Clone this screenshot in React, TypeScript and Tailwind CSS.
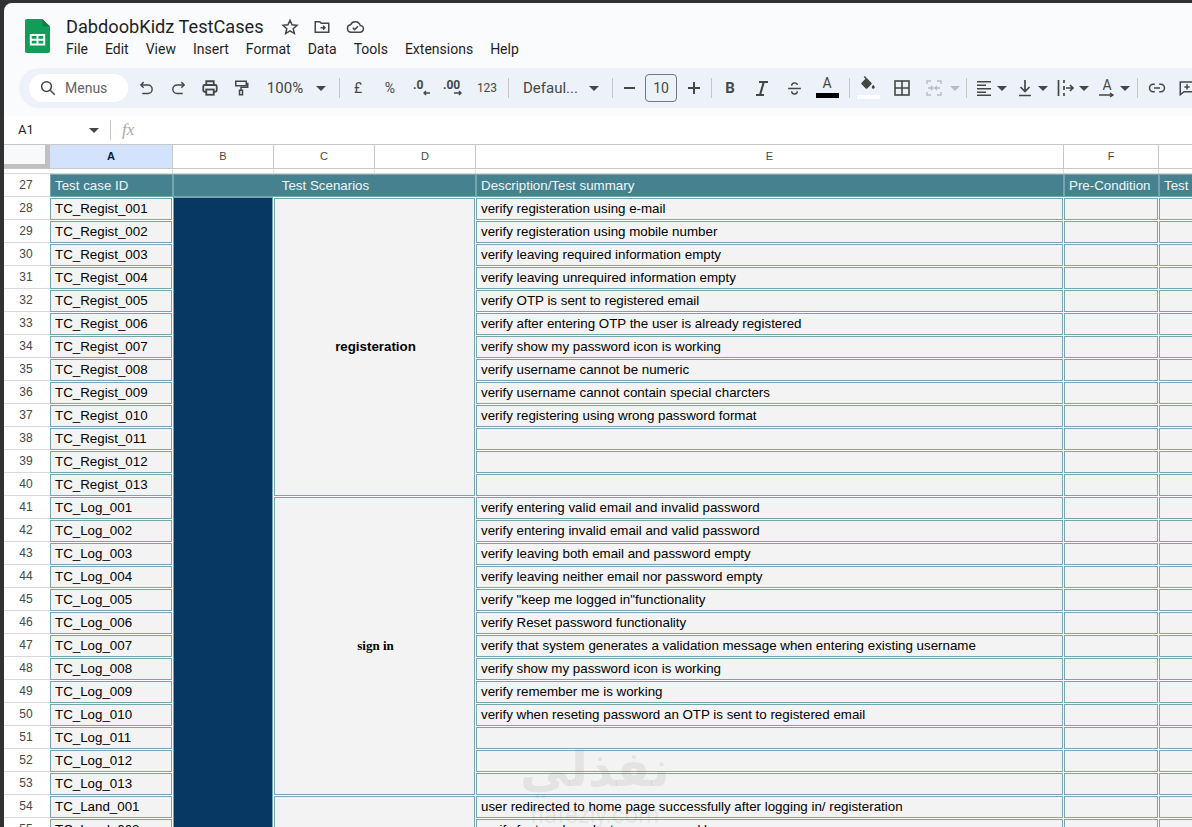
import React from "react";

const regist = ["verify registeration using e-mail","verify registeration using mobile number","verify leaving required information empty","verify leaving unrequired information empty","verify OTP is sent to registered email","verify after entering OTP the user is already registered","verify show my password icon is working","verify username cannot be numeric","verify username cannot contain special charcters","verify registering using wrong password format","","",""];
const log = ["verify entering valid email and invalid password","verify entering invalid email and valid password","verify leaving both email and password empty","verify leaving neither email nor password empty","verify \"keep me logged in\"functionality","verify Reset password functionality","verify that system generates a validation message when entering existing username","verify show my password icon is working","verify remember me is working","verify when reseting password an OTP is sent to registered email","","",""];
const land = ["user redirected to home page successfully after logging in/ registeration","verify featured products are arranged by"];

const rows: { n: number; id: string; e: string }[] = [];
regist.forEach((e, i) => rows.push({ n: 28 + i, id: "TC_Regist_" + String(i + 1).padStart(3, "0"), e }));
log.forEach((e, i) => rows.push({ n: 41 + i, id: "TC_Log_" + String(i + 1).padStart(3, "0"), e }));
land.forEach((e, i) => rows.push({ n: 54 + i, id: "TC_Land_" + String(i + 1).padStart(3, "0"), e }));

const Sep = () => <div className="w-px h-[20px] bg-[#c7c7c7] shrink-0" />;
const Caret = ({ c = "#444746" }: { c?: string }) => (
  <svg width="10" height="5" viewBox="0 0 10 5" className="shrink-0"><path d="M0 0h10L5 5z" fill={c} /></svg>
);
const L = ({ children, s = 18 }: { children: React.ReactNode; s?: number }) => (
  <svg width={s} height={s} viewBox="0 0 24 24" fill="none" stroke="#444746" strokeWidth="2">{children}</svg>
);

function Toolbar() {
  return (
    <div className="ml-[15px] mr-[-30px] h-[40px] rounded-[20px] bg-[#edf2fa] flex items-center text-[#444746] overflow-hidden shrink-0 font-['Roboto',sans-serif]">
      <div className="ml-[10px] w-[99px] h-[28px] rounded-[14px] bg-white flex items-center shrink-0 pl-[10px]">
        <svg width="18" height="18" viewBox="0 0 24 24" fill="none" stroke="#444746" strokeWidth="2"><circle cx="10" cy="10" r="6.5" /><path d="M15 15l6 6" /></svg>
        <span className="ml-[8px] text-[14px] text-[#5f6368]">Menus</span>
      </div>
      <div className="w-[32px] ml-[2px] flex justify-center shrink-0"><L s={17}><path d="M8 11L4 7l4-4" /><path d="M4 7h10a6 6 0 0 1 0 12H6" /></L></div>
      <div className="w-[32px] flex justify-center shrink-0"><L s={17}><path d="M16 11l4-4-4-4" /><path d="M20 7H10a6 6 0 0 0 0 12h8" /></L></div>
      <div className="w-[32px] flex justify-center shrink-0"><svg width="18" height="18" viewBox="0 0 24 24" fill="none" stroke="#444746" strokeWidth="2.400"><path d="M7 8V3h10v5" /><rect x="3" y="8" width="18" height="9" rx="2" /><rect x="7" y="14" width="10" height="7" fill="#edf2fa" /></svg></div>
      <div className="w-[30px] flex justify-center shrink-0"><L><rect x="5" y="3" width="14" height="6" /><path d="M19 6h2v5h-9v4" /><rect x="10" y="15" width="4" height="6" /></L></div>
      <div className="w-[58px] text-[15px] text-center shrink-0">100%</div>
      <div className="w-[2px] shrink-0" />
      <Caret />
      <div className="w-[13px] shrink-0" /><Sep />
      <div className="w-[36px] text-center text-[14px] shrink-0">£</div>
      <div className="w-[28px] text-center text-[14px] shrink-0">%</div>
      <div className="w-[36px] flex justify-center shrink-0"><svg width="20" height="20" viewBox="0 0 20 20" fill="none" stroke="#444746"><text x="1" y="11" fontSize="12" fontWeight="700" fill="#444746" stroke="none" fontFamily="Roboto, sans-serif">.0</text><path d="M18 15h-6M14 13l-2 2 2 2" strokeWidth="1.4" /></svg></div>
      <div className="w-[28px] flex justify-center shrink-0"><svg width="22" height="20" viewBox="0 0 22 20" fill="none" stroke="#444746"><text x="0" y="11" fontSize="12" fontWeight="700" fill="#444746" stroke="none" fontFamily="Roboto, sans-serif">.00</text><path d="M11 15h7M16 13l2 2-2 2" strokeWidth="1.4" /></svg></div>
      <div className="w-[38px] text-center text-[12px] shrink-0">123</div>
      <div className="w-[2px] shrink-0" /><Sep />
      <div className="w-[80px] text-[15px] pl-[14px] shrink-0 whitespace-nowrap">Defaul...</div>
      <Caret />
      <div className="w-[13px] shrink-0" /><Sep />
      <div className="w-[32px] flex justify-center shrink-0"><div className="w-[11px] h-[2px] bg-[#444746]" /></div>
      <div className="w-[32px] h-[28px] rounded-[4px] border border-[#747775] flex items-center justify-center text-[14px] shrink-0">10</div>
      <div className="w-[34px] flex justify-center shrink-0"><svg width="12" height="12" viewBox="0 0 12 12" fill="#444746"><path d="M5 0h2v5h5v2H7v5H5V7H0V5h5z" /></svg></div>
      <Sep />
      <div className="w-[36px] text-center font-bold text-[15px] shrink-0">B</div>
      <div className="w-[28px] flex justify-center shrink-0"><svg width="12" height="15" viewBox="0 0 12 15" fill="#444746"><path d="M3 0h9v2H8.600L5.400 13H8v2H0v-2h3.200L6.400 2H3z" /></svg></div>
      <div className="w-[36px] flex justify-center shrink-0"><L s={17}><path d="M3 12h18" /><path d="M8 8c0-5 8-5 8-1M8 16c0 5 8 5 8 0" /></L></div>
      <div className="w-[30px] flex flex-col items-center shrink-0 h-[24px] justify-start">
        <span className="text-[14px] leading-[16px] mt-[-1px]">A</span>
        <div className="w-[23px] h-[5px] bg-black mt-[2px]" />
      </div>
      <div className="w-[7px] shrink-0" /><Sep />
      <div className="w-[36px] flex flex-col items-center shrink-0 mt-[-2px]">
        <svg width="18" height="18" viewBox="0 0 24 24" fill="#444746"><path d="M16.560 8.940L7.620 0 6.210 1.410l2.380 2.380-5.150 5.150c-.59.59-.59 1.540 0 2.120l5.500 5.500c.29.29.68.44 1.060.44s.77-.15 1.060-.44l5.500-5.500c.59-.58.59-1.530 0-2.120zM19 11.500s-2 2.170-2 3.500c0 1.100.9 2 2 2s2-.9 2-2c0-1.330-2-3.500-2-3.500z" /></svg>
        <div className="w-[23px] h-[4px] bg-white mt-[1px]" />
      </div>
      <div className="w-[32px] flex justify-center shrink-0"><svg width="16" height="16" viewBox="0 0 16 16" fill="none" stroke="#444746" strokeWidth="1.6"><rect x="1" y="1" width="14" height="14" /><path d="M8 1v14M1 8h14" /></svg></div>
      <div className="w-[32px] flex justify-center shrink-0"><svg width="16" height="16" viewBox="0 0 16 16" fill="none" stroke="#b9bbbd" strokeWidth="1.4"><path d="M1 4V1h4M11 1h4v3M1 12v3h4M11 15h4v-3M7 8H2M9 8h5M5 6l2 2-2 2M11 6L9 8l2 2" /></svg></div>
      <Caret c="#b9bbbd" />
      <div className="w-[6px] shrink-0" /><Sep />
      <div className="ml-[9px] mr-[5px] flex shrink-0"><svg width="16" height="16" viewBox="0 0 16 16" fill="#444746"><path d="M1 1h14v1.500H1zM1 4.500h9V6H1zM1 8h14v1.500H1zM1 11.500h9V13H1zM1 14.500h14V16H1z" /></svg></div>
      <Caret />
      <div className="ml-[10px] mr-[5px] flex shrink-0"><svg width="16" height="18" viewBox="0 0 16 18" fill="none" stroke="#444746" strokeWidth="1.7"><path d="M8 1v11M3.500 8L8 12.500 12.500 8M2 16.500h12" /></svg></div>
      <Caret />
      <div className="ml-[9px] mr-[4px] flex shrink-0"><svg width="18" height="16" viewBox="0 0 18 16" fill="none" stroke="#444746" strokeWidth="1.7"><path d="M1.500 0v16M7 0v3M7 6v4M7 13v3M9 8h7M13 5l3 3-3 3" /></svg></div>
      <Caret />
      <div className="ml-[10px] mr-[5px] w-[16px] flex flex-col items-center shrink-0 text-[14px] leading-[14px]"><span>A</span><svg width="16" height="6" viewBox="0 0 16 6" fill="none" stroke="#444746" strokeWidth="1.4"><path d="M0 3h14M11 1l3 2-3 2" /></svg></div>
      <Caret />
      <div className="w-[7px] shrink-0" /><Sep />
      <div className="w-[38px] flex justify-center shrink-0"><L><path d="M9 7H7a5 5 0 0 0 0 10h2M15 7h2a5 5 0 0 1 0 10h-2M8 12h8" /></L></div>
      <div className="ml-[2px] w-[20px] flex justify-start shrink-0"><L><path d="M3 4h18v13H8l-5 4z" /><path d="M12 7v7M8.500 10.500h7" /></L></div>
    </div>
  );
}

const sans = "font-['Liberation_Sans',Arial,sans-serif]";
const cellTxt = sans + " text-[13.33px] text-black";
const headTxt = sans + " bg-[#45818e] border border-[#76a5af] text-[13.33px] text-[#eef7f8] flex items-center whitespace-nowrap overflow-hidden";
const frame = "bg-[#f3f3f3] border border-[#76a5af] mt-px mr-px overflow-hidden whitespace-nowrap flex items-center";
const cols = "grid grid-cols-[46px_123px_101px_101px_101px_588px_95px_100px]";

function ColHeader() {
  return (
    <>
      <div className={cols + " h-[24px] w-[1188px] bg-white border-b border-[#c7c7c7] shrink-0 overflow-hidden"}>
        <div className="bg-[#f8f9fa] border-r-[5px] border-b-[4px] border-[#c0c0c0]" />
        {["A", "B", "C", "D", "E", "F", ""].map((c, i) => (
          <div key={i} className={"flex items-center justify-center text-[11px] border-r border-[#c7c7c7] " + sans + " " + (i === 0 ? "bg-[#d3e3fd] text-[#041e49] font-bold" : "bg-white text-[#444746]")}>{c}</div>
        ))}
      </div>
      <div className={cols + " h-[5px] w-[1188px] bg-white shrink-0 border-b border-[#d9d9d9] overflow-hidden"}>
        <div />
        {["A", "B", "C", "D", "E", "F", "G"].map((c) => <div key={c} className="border-r border-[#e3e3e3]" />)}
      </div>
    </>
  );
}

function Body() {
  return (
    <div className={cols + " grid-rows-[repeat(29,23px)] w-[1188px] bg-white shrink-0"}>
      <div className={"row-start-1 col-start-1 flex items-center justify-center pr-[2px] text-[12px] text-[#444746] border-b border-[#d9d9d9] " + sans}>27</div>
      <div className={"row-start-1 col-start-2 pl-[4px] " + headTxt}>Test case ID</div>
      <div className={"row-start-1 col-start-3 col-span-3 justify-center pl-[2px] " + headTxt}>Test Scenarios</div>
      <div className={"row-start-1 col-start-6 pl-[4px] " + headTxt}>Description/Test summary</div>
      <div className={"row-start-1 col-start-7 pl-[4px] " + headTxt}>Pre-Condition</div>
      <div className={"row-start-1 col-start-8 pl-[4px] " + headTxt}>Test Steps</div>

      <div className="row-start-2 row-span-28 col-start-3 mr-px bg-[#073763] border border-[#76a5af]" />
      <div className={"row-start-2 row-span-13 col-start-4 col-span-2 justify-center pl-[2px] font-bold " + frame + " " + cellTxt}>registeration</div>
      <div className={"row-start-15 row-span-13 col-start-4 col-span-2 justify-center pl-[2px] font-bold text-[13px] font-['Liberation_Serif',serif] text-black " + frame}>sign in</div>
      <div className={"row-start-28 row-span-2 col-start-4 col-span-2 " + frame} />

      {rows.map((r, i) => (
        <React.Fragment key={r.n}>
          <div className={"col-start-1 flex items-center justify-center pr-[2px] text-[12px] text-[#444746] border-b border-[#d9d9d9] " + sans} style={{ gridRowStart: i + 2 }}>{r.n}</div>
          <div className={"col-start-2 pl-[4px] " + frame + " " + cellTxt} style={{ gridRowStart: i + 2 }}>{r.id}</div>
          <div className={"col-start-6 pl-[4px] " + frame + " " + cellTxt} style={{ gridRowStart: i + 2 }}>{r.e}</div>
          <div className={"col-start-7 " + frame} style={{ gridRowStart: i + 2 }} />
          <div className={"col-start-8 " + frame} style={{ gridRowStart: i + 2 }} />
        </React.Fragment>
      ))}
    </div>
  );
}

export default function App() {
  return (
    <div className="w-[1192px] h-[827px] overflow-hidden bg-[#2f3133] pt-[3px] pl-[4px] relative">
      <div className="w-[1188px] h-[824px] rounded-tl-[8px] bg-[#f9fbfd] overflow-hidden flex flex-col">
        <div className="h-[65px] flex shrink-0">
          <div className="w-[62px] shrink-0 pl-[21px] pt-[16px]">
            <svg width="25" height="34" viewBox="0 0 26 36" preserveAspectRatio="none">
              <path d="M2 0h16l8 8v26a2 2 0 0 1-2 2H2a2 2 0 0 1-2-2V2a2 2 0 0 1 2-2z" fill="#0f9d58" />
              <path d="M18 0l8 8h-6a2 2 0 0 1-2-2z" fill="#0b8043" />
              <path d="M5 16h16v12H5z" fill="#fff" />
              <path d="M7 18h5v3H7zM14 18h5v3h-5zM7 23h5v3H7zM14 23h5v3h-5z" fill="#0f9d58" />
            </svg>
          </div>
          <div className="flex flex-col pt-[12px] font-['Roboto',sans-serif]">
            <div className="flex items-center h-[24px]">
              <span className="text-[18.2px] text-[#1f1f1f] w-[215px] whitespace-nowrap">DabdoobKidz TestCases</span>
              <span className="w-[32px] flex"><svg width="18" height="18" viewBox="0 0 24 24" fill="none" stroke="#444746" strokeWidth="2"><path d="M12 3l2.700 6.100 6.600.7-5 4.400 1.500 6.500L12 17.300 6.200 20.700l1.500-6.500-5-4.400 6.600-.7z" /></svg></span>
              <span className="w-[32px] flex"><svg width="18" height="18" viewBox="0 0 24 24" fill="none" stroke="#444746" strokeWidth="2"><path d="M3 5h6l2 2h10v12H3z" /><path d="M10 13h6M13.500 10.500L16 13l-2.500 2.500" /></svg></span>
              <span className="flex"><svg width="20" height="18" viewBox="0 0 24 24" fill="none" stroke="#444746" strokeWidth="2"><path d="M7 19a5 5 0 0 1-1-9.900A7 7 0 0 1 19 10a4.500 4.500 0 0 1-.5 9z" /><path d="M9 13l2.500 2.500L16 11" /></svg></span>
            </div>
            <div className="flex items-center text-[14px] text-[#1f1f1f] gap-[17px] mt-[-1px] h-[22px]">
              {["File", "Edit", "View", "Insert", "Format", "Data", "Tools", "Extensions", "Help"].map((m) => <span key={m}>{m}</span>)}
            </div>
          </div>
        </div>
        <Toolbar />
        <div className="h-[29px] shrink-0 flex items-center bg-white mt-[8px] border-b border-[#c7c7c7] font-['Roboto',sans-serif]">
          <span className="ml-[14px] w-[71px] text-[13px] text-[#1f1f1f]">A1</span>
          <Caret />
          <div className="w-[11px]" /><Sep />
          <span className="ml-[11px] text-[17px] italic text-[#a8abad] font-['Liberation_Serif',serif]">fx</span>
        </div>
        <ColHeader />
        <Body />
      </div>
      <div className="absolute left-[515px] top-[745px] w-[160px] text-center pointer-events-none select-none">
        <div dir="rtl" className="text-[49px] leading-[50px] font-bold text-[#8a8a8a]/15 font-['DejaVu_Sans',sans-serif]">نفذلي</div>
        <div className="text-[24px] leading-[24px] mt-[8px] text-[#8a8a8a]/15 font-['Roboto',sans-serif]">nafezly.com</div>
      </div>
    </div>
  );
}
